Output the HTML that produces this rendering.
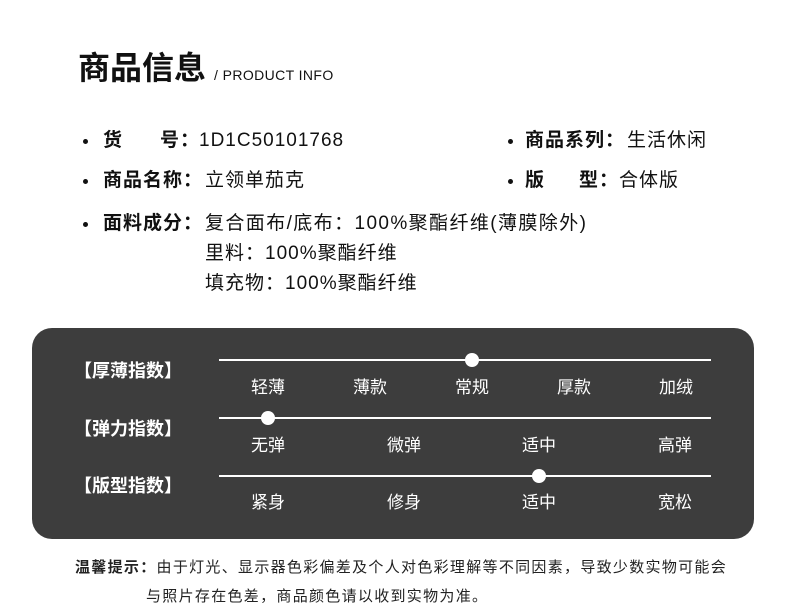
<!DOCTYPE html>
<html><head><meta charset="utf-8"><style>
*{margin:0;padding:0;box-sizing:border-box}
body{width:790px;height:604px;background:#fff;position:relative;overflow:hidden;font-family:"Liberation Sans","Noto Sans CJK SC",sans-serif;color:#111}
.a{position:absolute;white-space:nowrap}
.t{font-size:32px;font-weight:bold;left:78px;top:48px;line-height:40px}
.st{font-size:14px;left:214px;top:67px;letter-spacing:0.4px}
.r{font-size:19px;line-height:24px;letter-spacing:1px}
.b{font-weight:bold}
.dot{position:absolute;width:5px;height:5px;border-radius:50%;background:#111}
.box{position:absolute;left:32px;top:328px;width:722px;height:211px;background:#3d3d3d;border-radius:20px}
.ln{position:absolute;left:219px;width:492px;height:2px;background:#fff}
.k{position:absolute;width:14px;height:14px;border-radius:50%;background:#fff}
.w{color:#fff;font-size:17px;line-height:22px;transform:translateX(-50%)}
.lb{color:#fff;font-size:18px;font-weight:bold;left:74px;line-height:24px}
.f{font-size:15px;line-height:20px;color:#222;letter-spacing:1.3px}
</style></head><body>
<div class="a t">商品信息</div>
<div class="a st">/ PRODUCT INFO</div>

<div class="dot" style="left:83px;top:139px"></div>
<div class="a r b" style="left:103px;top:129px">货</div>
<div class="a r b" style="left:160px;top:129px">号：</div>
<div class="a r" style="left:199px;top:129px">1D1C50101768</div>
<div class="dot" style="left:508px;top:139px"></div>
<div class="a r b" style="left:525px;top:129px">商品系列：</div>
<div class="a r" style="left:627px;top:129px">生活休闲</div>

<div class="dot" style="left:83px;top:179px"></div>
<div class="a r b" style="left:103px;top:169px">商品名称：</div>
<div class="a r" style="left:205px;top:169px">立领单茄克</div>
<div class="dot" style="left:508px;top:179px"></div>
<div class="a r b" style="left:525px;top:169px">版</div>
<div class="a r b" style="left:579px;top:169px">型：</div>
<div class="a r" style="left:619px;top:169px">合体版</div>

<div class="dot" style="left:83px;top:222px"></div>
<div class="a r b" style="left:103px;top:212px">面料成分：</div>
<div class="a r" style="left:205px;top:212px;letter-spacing:1.4px">复合面布/底布：100%聚酯纤维(薄膜除外)</div>
<div class="a r" style="left:205px;top:242px">里料：100%聚酯纤维</div>
<div class="a r" style="left:205px;top:272px">填充物：100%聚酯纤维</div>

<div class="box"></div>
<div class="a lb" style="top:359px">【厚薄指数】</div>
<div class="a lb" style="top:417px">【弹力指数】</div>
<div class="a lb" style="top:474px">【版型指数】</div>
<div class="ln" style="top:359px"></div>
<div class="ln" style="top:417px"></div>
<div class="ln" style="top:475px"></div>
<div class="k" style="left:465px;top:353px"></div>
<div class="k" style="left:261px;top:411px"></div>
<div class="k" style="left:532px;top:469px"></div>

<div class="a w" style="left:268px;top:377px">轻薄</div>
<div class="a w" style="left:370px;top:377px">薄款</div>
<div class="a w" style="left:472px;top:377px">常规</div>
<div class="a w" style="left:574px;top:377px">厚款</div>
<div class="a w" style="left:676px;top:377px">加绒</div>

<div class="a w" style="left:268px;top:435px">无弹</div>
<div class="a w" style="left:404px;top:435px">微弹</div>
<div class="a w" style="left:539px;top:435px">适中</div>
<div class="a w" style="left:675px;top:435px">高弹</div>

<div class="a w" style="left:268px;top:492px">紧身</div>
<div class="a w" style="left:404px;top:492px">修身</div>
<div class="a w" style="left:539px;top:492px">适中</div>
<div class="a w" style="left:675px;top:492px">宽松</div>

<div class="a f" style="left:75px;top:558px"><b>温馨提示：</b>由于灯光、显示器色彩偏差及个人对色彩理解等不同因素，导致少数实物可能会</div>
<div class="a f" style="left:146px;top:587px">与照片存在色差，商品颜色请以收到实物为准。</div>
</body></html>
